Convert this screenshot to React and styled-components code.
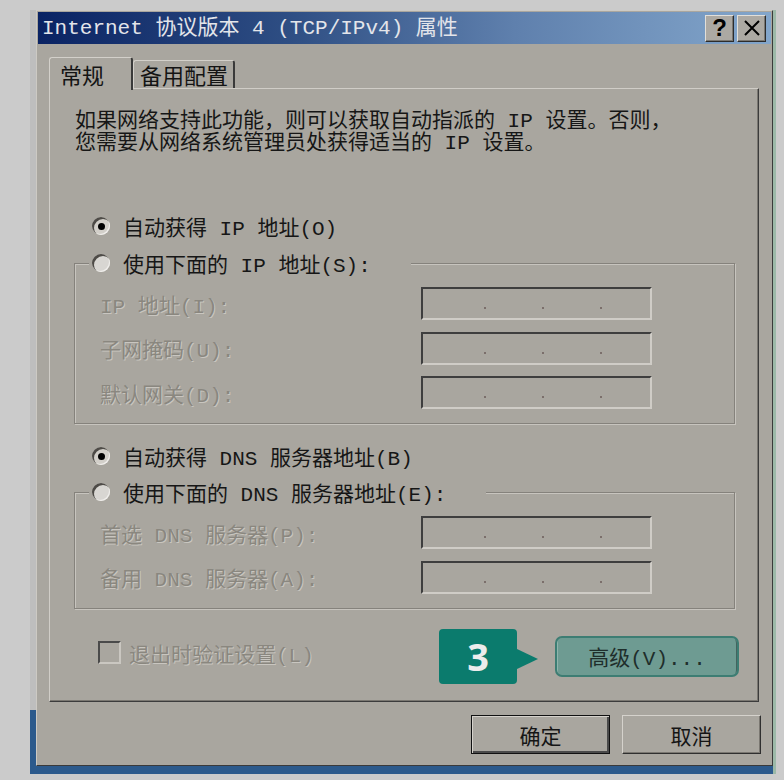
import React from "react";
import styled, { createGlobalStyle } from "styled-components";

const FONT = `"Liberation Mono", "Noto Sans CJK SC", monospace`;
const FACE = "#a9a69f";

const GlobalStyle = createGlobalStyle`
  html, body {
    margin: 0;
    padding: 0;
    background: #cbcbcb;
  }
  body {
    font-family: ${FONT};
  }
  * {
    box-sizing: border-box;
  }
`;

const Stage = styled.div`
  width: 784px;
  height: 780px;
  padding: 10px 0 0 30px;
  background: #cbcbcb;
  overflow: hidden;
`;

// window behind the dialog: grey strip on the left, blue band at the bottom
const Frame = styled.div`
  display: flex;
  width: 746px;
  padding: 0 0 8px 6px;
  background: linear-gradient(to bottom, #bebebe 0, #bebebe 700px, #2c5a8c 700px);
  border-right: 3px solid #9cb9a8;
`;

const Dialog = styled.div`
  width: 737px;
  height: 756px;
  display: flex;
  flex-direction: column;
  background: ${FACE};
  border: 1px solid;
  border-color: #cdcac4 #3a3a3a #3a3a3a #cdcac4;
  padding: 1px;
`;

const TitleBar = styled.div`
  height: 32px;
  display: flex;
  align-items: center;
  padding: 0 5px 0 4px;
  background: linear-gradient(90deg, #0a2363 0%, #2f4f84 35%, #5f80ad 65%, #83a6cb 100%);
`;

const Title = styled.div`
  flex: 1;
  color: #e3e5ea;
  font-size: 21px;
  line-height: 1;
  white-space: nowrap;
`;

const TitleButtons = styled.div`
  display: flex;
  gap: 3px;
`;

const TitleBtn = styled.div`
  width: 29px;
  height: 27px;
  display: flex;
  align-items: center;
  justify-content: center;
  background: #aca9a3;
  border: 1px solid;
  border-color: #e2dfd9 #2c2c2c #2c2c2c #e2dfd9;
  box-shadow: inset -1px -1px #7a7771;
  font-family: "Liberation Sans", sans-serif;
  font-weight: 700;
  font-size: 24px;
  color: #000;
`;

const Body = styled.div`
  flex: 1;
  display: flex;
  flex-direction: column;
  padding: 13px 10px 0 11px;
`;

const TabRow = styled.div`
  height: 31px;
  display: flex;
  align-items: flex-end;
`;

const Tab = styled.div`
  position: relative;
  z-index: ${(p) => (p.$active ? 1 : 0)};
  width: ${(p) => p.$w}px;
  height: ${(p) => (p.$active ? 33 : 28)}px;
  margin-bottom: ${(p) => (p.$active ? -2 : 0)}px;
  display: flex;
  align-items: center;
  padding-left: ${(p) => (p.$active ? 10 : 6)}px;
  font-size: 22px;
  color: #141414;
  background: ${FACE};
  border-top: 1px solid #d3d0ca;
  border-left: 1px solid #d3d0ca;
  border-right: 2px solid #3a3a3a;
  border-radius: 3px 3px 0 0;
`;

const Panel = styled.div`
  width: 710px;
  height: 614px;
  display: flex;
  flex-direction: column;
  padding: 22px 23px 0 24px;
  border: 1px solid;
  border-color: #d0cdc7 #3c3c3c #3c3c3c #d0cdc7;
  box-shadow: inset -1px -1px #7a7771;
`;

const Intro = styled.p`
  margin: 0 0 0 1px;
  font-size: 21px;
  line-height: 22px;
  color: #161616;
`;

const RadioRow = styled.div`
  height: 26px;
  display: flex;
  align-items: center;
  gap: 13px;
  margin-top: ${(p) => p.$mt || 0}px;
  padding-left: ${(p) => (p.$inLegend ? 0 : 18)}px;
  font-size: 21px;
  color: #161616;
  white-space: nowrap;
`;

const RadioMark = styled.span`
  width: 18px;
  height: 18px;
  flex: none;
  display: flex;
  align-items: center;
  justify-content: center;
  border-radius: 50%;
  background: ${(p) => (p.$checked ? "#d2cfc9" : "#d8d6d2")};
  box-shadow: inset 2px 2px 0 #4e4b47, inset -1px -1px 0 #efedea;
  &::after {
    content: "";
    display: ${(p) => (p.$checked ? "block" : "none")};
    width: 7px;
    height: 7px;
    border-radius: 50%;
    background: #000;
  }
`;

const Group = styled.fieldset`
  width: 661px;
  margin: ${(p) => p.$mt}px 0 0;
  padding: 0;
  min-width: 0;
  border: 1px solid #85827c;
  box-shadow: inset 1px 1px #c7c4be, 1px 1px #c7c4be;
`;

const Legend = styled.legend`
  margin-left: 14px;
  padding: 0 40px 0 3px;
  background: ${FACE};
`;

const FieldGrid = styled.div`
  display: grid;
  grid-template-columns: 321px 231px;
  row-gap: 11.5px;
  padding: 11px 0 14px 25px;
`;

const FieldLabel = styled.div`
  align-self: center;
  font-size: 21px;
  color: #8a877f;
  text-shadow: 1px 1px #c9c6c0;
  white-space: nowrap;
`;

const IpBox = styled.div`
  height: 33px;
  display: flex;
  align-items: flex-start;
  gap: 56px;
  padding: 18px 0 0 61px;
  border: 2px solid;
  border-color: #3e3e3e #cfccc6 #cfccc6 #3e3e3e;
`;

const IpDot = styled.span`
  width: 2px;
  height: 2px;
  background: #7b6f6b;
`;

const BottomRow = styled.div`
  height: 55px;
  display: flex;
  align-items: flex-start;
  margin-top: 20px;
`;

const CheckRow = styled.div`
  display: flex;
  align-items: center;
  gap: 8px;
  margin-top: 9px;
  padding-left: 24px;
`;

const CheckBox = styled.span`
  width: 23px;
  height: 23px;
  border: 2px solid;
  border-color: #4a4a4a #cac7c1 #cac7c1 #4a4a4a;
`;

const Callout = styled.div`
  margin-left: auto;
  margin-right: -4px;
  display: flex;
  align-items: flex-start;
`;

const Badge = styled.div`
  width: 78px;
  height: 55px;
  display: flex;
  align-items: center;
  justify-content: center;
  background: #0b7b6d;
  border-radius: 4px;
  color: #ececec;
  font-family: "Open Sans", "Noto Sans", sans-serif;
  font-weight: 700;
  font-size: 38px;
`;

const Pointer = styled.span`
  width: 0;
  height: 0;
  margin-top: 20px;
  border-left: 21px solid #0b7b6d;
  border-top: 10px solid transparent;
  border-bottom: 10px solid transparent;
`;

const AdvancedBtn = styled.button`
  width: 184px;
  height: 41px;
  margin: 7px 0 0 17px;
  padding: 0;
  font-family: inherit;
  font-size: 21px;
  color: #1f2e2b;
  background: #6e9b92;
  border: 2px solid #3d7d73;
  border-radius: 7px;
  box-shadow: inset 11px 0 0 -10px #8fb5ac, inset -5px 0 0 -4px #44645e;
`;

const ButtonRow = styled.div`
  display: flex;
  justify-content: flex-end;
  gap: 12px;
  margin-top: 13px;
`;

const DlgButton = styled.button`
  width: 139px;
  height: 39px;
  padding: 0;
  font-family: inherit;
  font-size: 21px;
  color: #151515;
  background: ${FACE};
  border: 1px solid;
  border-color: ${(p) =>
    p.$default ? "#111" : "#d5d2cc #2f2f2f #2f2f2f #d5d2cc"};
  box-shadow: ${(p) =>
    p.$default
      ? "inset 1px 1px #d5d2cc, inset -2px -2px #4a4a4a"
      : "inset -1px -1px #7a7771"};
`;

const Radio = ({ checked, label, mt, inLegend }) => (
  <RadioRow $mt={mt} $inLegend={inLegend}>
    <RadioMark $checked={checked} />
    {label}
  </RadioRow>
);

const IpField = ({ label }) => (
  <>
    <FieldLabel>{label}</FieldLabel>
    <IpBox>
      <IpDot />
      <IpDot />
      <IpDot />
    </IpBox>
  </>
);

export default function App() {
  return (
    <>
      <GlobalStyle />
      <Stage>
        <Frame>
          <Dialog>
            <TitleBar>
              <Title>Internet 协议版本 4 (TCP/IPv4) 属性</Title>
              <TitleButtons>
                <TitleBtn>?</TitleBtn>
                <TitleBtn>
                  <svg width="18" height="16" viewBox="0 0 18 16">
                    <path d="M2 1 L16 15 M16 1 L2 15" stroke="#000" strokeWidth="2" fill="none" />
                  </svg>
                </TitleBtn>
              </TitleButtons>
            </TitleBar>
            <Body>
              <TabRow>
                <Tab $active $w={84}>常规</Tab>
                <Tab $w={102}>备用配置</Tab>
              </TabRow>
              <Panel>
                <Intro>
                  如果网络支持此功能，则可以获取自动指派的 IP 设置。否则，
                  <br />
                  您需要从网络系统管理员处获得适当的 IP 设置。
                </Intro>

                <Radio checked label="自动获得 IP 地址(O)" mt={58} />
                <Group $mt={11}>
                  <Legend>
                    <Radio inLegend label="使用下面的 IP 地址(S):" />
                  </Legend>
                  <FieldGrid>
                    <IpField label="IP 地址(I):" />
                    <IpField label="子网掩码(U):" />
                    <IpField label="默认网关(D):" />
                  </FieldGrid>
                </Group>

                <Radio checked label="自动获得 DNS 服务器地址(B)" mt={19} />
                <Group $mt={10}>
                  <Legend>
                    <Radio inLegend label="使用下面的 DNS 服务器地址(E):" />
                  </Legend>
                  <FieldGrid>
                    <IpField label="首选 DNS 服务器(P):" />
                    <IpField label="备用 DNS 服务器(A):" />
                  </FieldGrid>
                </Group>

                <BottomRow>
                  <CheckRow>
                    <CheckBox />
                    <FieldLabel>退出时验证设置(L)</FieldLabel>
                  </CheckRow>
                  <Callout>
                    <Badge>3</Badge>
                    <Pointer />
                    <AdvancedBtn>高级(V)...</AdvancedBtn>
                  </Callout>
                </BottomRow>
              </Panel>
              <ButtonRow>
                <DlgButton $default>确定</DlgButton>
                <DlgButton>取消</DlgButton>
              </ButtonRow>
            </Body>
          </Dialog>
        </Frame>
      </Stage>
    </>
  );
}
